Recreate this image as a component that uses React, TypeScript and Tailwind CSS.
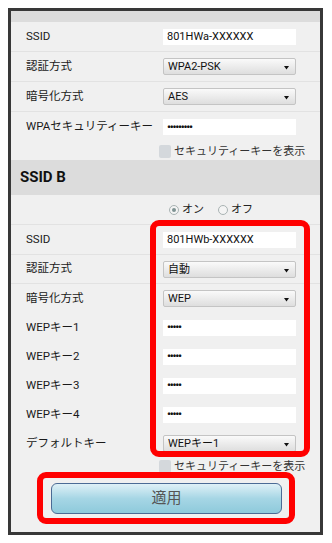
const font = { fontFamily: "Roboto, 'Noto Sans CJK JP', 'Noto Sans', sans-serif" }

function Caret() {
  return (
    <svg width="5" height="5" viewBox="0 0 5 5" className="absolute right-[6px] top-[6px]">
      <path d="M0 1 L5 1 L2.5 4.5 Z" fill="#111" />
    </svg>
  )
}

function TextBox({ value, dots }: { value: string; dots?: boolean }) {
  return (
    <div className="flex h-[16px] w-[133px] items-center bg-white pl-[4px]">
      {dots ? (
        <span className="text-[11px] font-bold leading-none tracking-[-1.2px] text-[#111]">{value}</span>
      ) : (
        <span className="text-[11px] leading-none text-[#111]">{value}</span>
      )}
    </div>
  )
}

function SelectBox({ value }: { value: string }) {
  return (
    <div className="relative flex h-[17px] w-[133px] items-center rounded-[2px] border border-[#c4c4c4] bg-gradient-to-b from-[#fafafa] to-[#dedede] pl-[4px]">
      <span className="text-[11px] leading-none text-[#111]">{value}</span>
      <Caret />
    </div>
  )
}

function Row({
  label,
  children,
  h = 'h-[30px]',
  line = true,
}: {
  label?: string
  children: React.ReactNode
  h?: string
  line?: boolean
}) {
  return (
    <div className={`flex items-center ${h} ${line ? 'border-b border-[#e2e2e2]' : ''}`}>
      <div className="w-[152px] pl-[15px] text-[11.5px] text-[#1a1a1a]">{label}</div>
      {children}
    </div>
  )
}

function ShowKey() {
  return (
    <div className="flex items-center pl-[148px]">
      <div className="h-[13px] w-[12px] rounded-[2px] bg-[#d4d8dc]" />
      <span className="ml-[3px] text-[11px] leading-none text-[#333]">セキュリティーキーを表示</span>
    </div>
  )
}

function Radio({ on, label }: { on?: boolean; label: string }) {
  return (
    <div className="flex items-center">
      <div className="flex h-[10px] w-[10px] items-center justify-center rounded-full border border-[#a9b3b3] bg-[#f4f4f4]">
        {on && <div className="h-[4px] w-[4px] rounded-full bg-[#7f9393]" />}
      </div>
      <span className="ml-[3px] text-[11px] leading-none text-[#222]">{label}</span>
    </div>
  )
}

export default function App() {
  return (
    <div className="h-[543px] w-[332px] bg-white pl-[8px] pt-[8px]" style={font}>
      <div className="relative h-[527px] w-[315px] border-[3px] border-[#383838] bg-[#f0f0f0]">
        <div className="h-[11px] bg-[#dcdcdc]" />

        <Row label="SSID">
          <TextBox value="801HWa-XXXXXX" />
        </Row>
        <Row label="認証方式">
          <SelectBox value="WPA2-PSK" />
        </Row>
        <Row label="暗号化方式">
          <SelectBox value="AES" />
        </Row>
        <Row label="WPAセキュリティーキー" line={false}>
          <TextBox value="•••••••••" dots />
        </Row>
        <div className="flex h-[18px] items-center">
          <ShowKey />
        </div>

        <div className="flex h-[35px] items-center bg-[#dcdcdc] pl-[9px]">
          <span className="text-[15px] font-bold text-[#111]">SSID B</span>
        </div>

        <Row>
          <div className="flex items-center gap-[14px] pl-[6px]">
            <Radio on label="オン" />
            <Radio label="オフ" />
          </div>
        </Row>
        <Row label="SSID">
          <TextBox value="801HWb-XXXXXX" />
        </Row>
        <Row label="認証方式" h="h-[29px]">
          <SelectBox value="自動" />
        </Row>
        <Row label="暗号化方式" h="h-[29px]" line={false}>
          <SelectBox value="WEP" />
        </Row>
        <Row label="WEPキー1" h="h-[29px]" line={false}>
          <TextBox value="•••••" dots />
        </Row>
        <Row label="WEPキー2" h="h-[29px]" line={false}>
          <TextBox value="•••••" dots />
        </Row>
        <Row label="WEPキー3" h="h-[29px]" line={false}>
          <TextBox value="•••••" dots />
        </Row>
        <Row label="WEPキー4" h="h-[29px]" line={false}>
          <TextBox value="•••••" dots />
        </Row>
        <Row label="デフォルトキー" h="h-[29px]" line={false}>
          <SelectBox value="WEPキー1" />
        </Row>
        <div className="flex h-[16px] items-center">
          <ShowKey />
        </div>

        <div className="pl-[40px] pt-[9px]">
          <button className="flex h-[31px] w-[231px] items-center justify-center rounded-[6px] border-[1.5px] border-[#4b6b95] bg-gradient-to-b from-[#dff1f7] via-[#a6d6e5] to-[#8ecadb]">
            <span className="text-[15px] text-[#555]">適用</span>
          </button>
        </div>

        <div className="absolute left-[139px] top-[209px] h-[237px] w-[160px] rounded-[9px] border-[6px] border-[#ff0000]" />
        <div className="absolute left-[26px] top-[461px] h-[52px] w-[258px] rounded-[9px] border-[6px] border-[#ff0000]" />
      </div>
    </div>
  )
}
